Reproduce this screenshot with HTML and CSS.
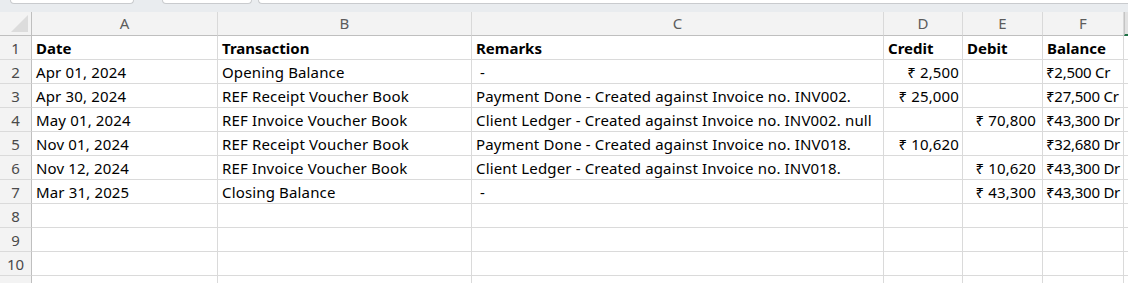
FILE: index.html
```html
<!DOCTYPE html>
<html lang="en">
<head>
<meta charset="UTF-8">
<title>Ledger</title>
<link rel="stylesheet" href="styles.css">
</head>
<body>
<div class="topbar">
    <div class="tab tab-one"></div>
    <div class="tab tab-two"></div>
    <div class="tab tab-three"></div>
</div>
<div class="sheet">
    <!-- column headers -->
    <div class="corner">
        <svg width="17" height="17" viewBox="0 0 17 17"><polygon points="0,17 17,0 17,17" fill="#dcdcdc"/></svg>
    </div>
    <div class="colhead">A</div>
    <div class="colhead">B</div>
    <div class="colhead">C</div>
    <div class="colhead">D</div>
    <div class="colhead">E</div>
    <div class="colhead">F</div>
    <div class="colhead colhead-sel"></div>

    <div class="rowhead">1</div>
    <div class="cell bold">Date</div>
    <div class="cell bold">Transaction</div>
    <div class="cell bold">Remarks</div>
    <div class="cell bold">Credit</div>
    <div class="cell bold">Debit</div>
    <div class="cell bold">Balance</div>
    <div class="cell"></div>

    <div class="rowhead">2</div>
    <div class="cell">Apr 01, 2024</div>
    <div class="cell">Opening Balance</div>
    <div class="cell">&nbsp;-</div>
    <div class="cell num credit">₹ 2,500</div>
    <div class="cell num debit"></div>
    <div class="cell bal">₹2,500 Cr</div>
    <div class="cell"></div>

    <div class="rowhead">3</div>
    <div class="cell">Apr 30, 2024</div>
    <div class="cell">REF Receipt Voucher Book</div>
    <div class="cell">Payment Done - Created against Invoice no. INV002.</div>
    <div class="cell num credit">₹ 25,000</div>
    <div class="cell num debit"></div>
    <div class="cell bal">₹27,500 Cr</div>
    <div class="cell"></div>

    <div class="rowhead">4</div>
    <div class="cell">May 01, 2024</div>
    <div class="cell">REF Invoice Voucher Book</div>
    <div class="cell">Client Ledger - Created against Invoice no. INV002. null</div>
    <div class="cell num credit"></div>
    <div class="cell num debit">₹ 70,800</div>
    <div class="cell bal">₹43,300 Dr</div>
    <div class="cell"></div>

    <div class="rowhead">5</div>
    <div class="cell">Nov 01, 2024</div>
    <div class="cell">REF Receipt Voucher Book</div>
    <div class="cell">Payment Done - Created against Invoice no. INV018.</div>
    <div class="cell num credit">₹ 10,620</div>
    <div class="cell num debit"></div>
    <div class="cell bal">₹32,680 Dr</div>
    <div class="cell"></div>

    <div class="rowhead">6</div>
    <div class="cell">Nov 12, 2024</div>
    <div class="cell">REF Invoice Voucher Book</div>
    <div class="cell">Client Ledger - Created against Invoice no. INV018.</div>
    <div class="cell num credit"></div>
    <div class="cell num debit">₹ 10,620</div>
    <div class="cell bal">₹43,300 Dr</div>
    <div class="cell"></div>

    <div class="rowhead">7</div>
    <div class="cell">Mar 31, 2025</div>
    <div class="cell">Closing Balance</div>
    <div class="cell">&nbsp;-</div>
    <div class="cell num credit"></div>
    <div class="cell num debit">₹ 43,300</div>
    <div class="cell bal">₹43,300 Dr</div>
    <div class="cell"></div>

    <div class="rowhead">8</div>
    <div class="cell"></div><div class="cell"></div><div class="cell"></div><div class="cell"></div><div class="cell"></div><div class="cell"></div><div class="cell"></div>
    <div class="rowhead">9</div>
    <div class="cell"></div><div class="cell"></div><div class="cell"></div><div class="cell"></div><div class="cell"></div><div class="cell"></div><div class="cell"></div>
    <div class="rowhead">10</div>
    <div class="cell"></div><div class="cell"></div><div class="cell"></div><div class="cell"></div><div class="cell"></div><div class="cell"></div><div class="cell"></div>
    <div class="rowhead">11</div>
    <div class="cell"></div><div class="cell"></div><div class="cell"></div><div class="cell"></div><div class="cell"></div><div class="cell"></div><div class="cell"></div>
</div>
</body>
</html>
```

FILE: styles.css
```css
* {
    padding: 0;
    margin: 0;
    box-sizing: border-box;
}

body {
    background-color: #ffffff;
    font-family: "Noto Sans", "DejaVu Sans", sans-serif;
    font-size: 15px;
    color: #000000;
    overflow: hidden;
}

/* strip of tabs above the grid */
.topbar {
    height: 12px;
    background-color: #e9ecef;
    display: flex;
    align-items: flex-start;
}

.tab {
    height: 4px;
    background-color: #ffffff;
    border: 1px solid #c9cbce;
    border-top: none;
    border-radius: 0 0 6px 6px;
}

.tab-one {
    margin-left: 10px;
    width: 124px;
}

.tab-two {
    margin-left: 28px;
    width: 90px;
}

.tab-three {
    margin-left: 6px;
    flex: 1;
    border-right: none;
    border-radius: 0 0 0 6px;
}

/* the grid */
.sheet {
    display: grid;
    grid-template-columns: 32px 186px 254px 412px 79px 80px 81px 1fr;
    grid-auto-rows: 24px;
}

.corner {
    background-color: #f3f3f3;
    border-right: 1px solid #bfbfbf;
    border-bottom: 1px solid #bfbfbf;
    display: flex;
    align-items: flex-end;
    justify-content: flex-end;
    padding: 0 3px 3px 0;
}

.corner svg {
    display: block;
}

.colhead {
    background-color: #f3f3f3;
    border-right: 1px solid #d9d9d9;
    border-bottom: 1px solid #bfbfbf;
    color: #5c5c5c;
    font-size: 15px;
    text-align: center;
    line-height: 23px;
}

.colhead-sel {
    background-color: #e2e2e2;
    border-bottom: 2px solid #1e7145;
    border-left: 1px solid #c4c4c4;
}

.rowhead {
    background-color: #f3f3f3;
    border-right: 1px solid #bfbfbf;
    border-bottom: 1px solid #dadada;
    color: #4a4a4a;
    font-size: 15px;
    text-align: center;
    line-height: 24px;
}

.cell {
    border-right: 1px solid #dadada;
    border-bottom: 1px solid #dadada;
    padding-left: 4px;
    line-height: 24px;
    letter-spacing: 0.15px;
    white-space: nowrap;
}

.bold {
    font-weight: 700;
    letter-spacing: 0;
}

.num {
    text-align: right;
}

.credit {
    padding-right: 3px;
}

.debit {
    padding-right: 6px;
}

.bal {
    padding-left: 3px;
    letter-spacing: -0.25px;
}
```
